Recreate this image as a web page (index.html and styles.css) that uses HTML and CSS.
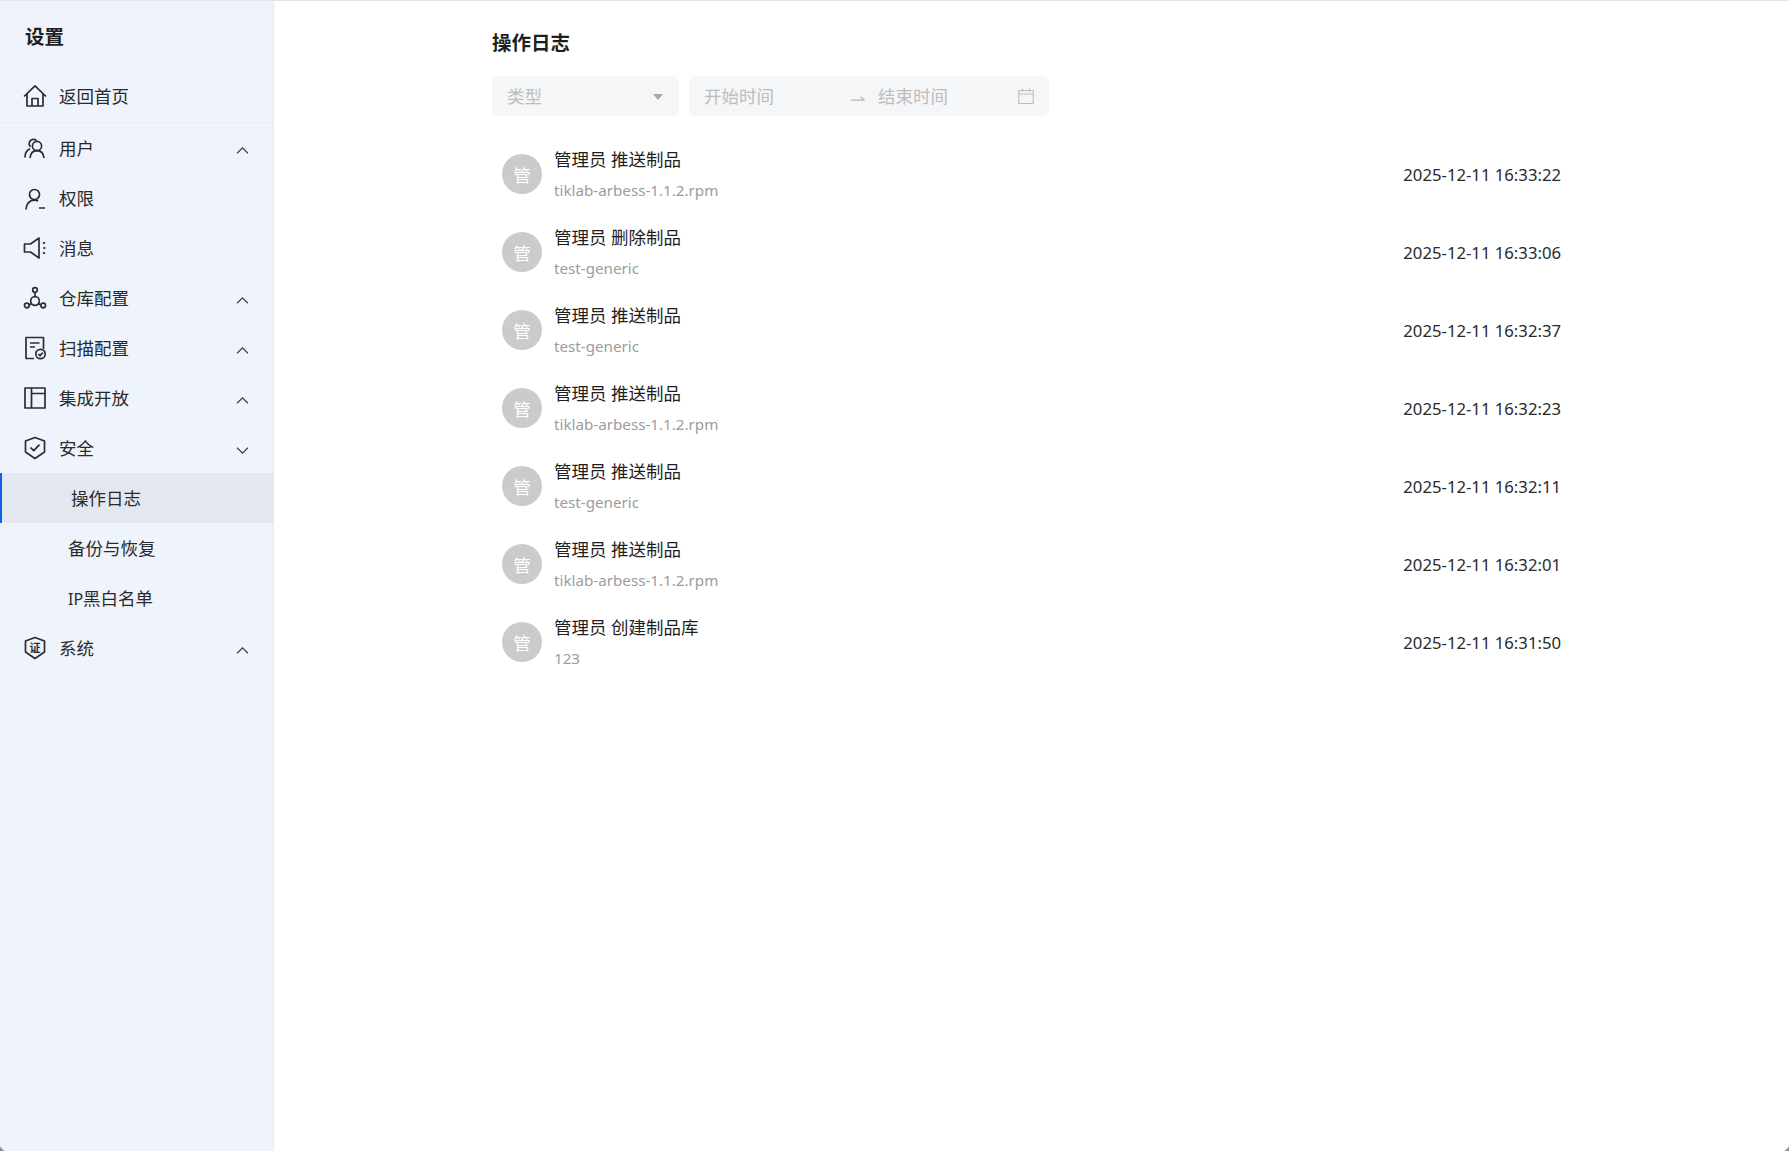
FILE: index.html
```html
<!DOCTYPE html>
<html lang="zh-CN">
<head>
<meta charset="utf-8">
<title>操作日志</title>
<link rel="stylesheet" href="styles.css">
</head>
<body>
<div class="app">
  <aside class="sidebar">
    <div class="side-title">设置</div>
    <nav class="menu">
      <a class="item home">
        <svg class="ico" viewBox="0 0 24 24"><path d="M1 12.500 12 1.800 23 12.500M4 10.200V22h16V10.200M9 22v-7.500h6V22"/></svg>
        <span class="label">返回首页</span>
      </a>
      <a class="item">
        <svg class="ico" viewBox="0 0 24 24"><path d="M7.500 10.800a4.300 4.300 0 1 1 6-6.300M2 21.500c0-4 1.800-7.300 5-8.700"/><circle cx="14" cy="10" r="4.600"/><path d="M7 22c.4-4.700 3-7.400 7-7.400s6.600 2.700 7 7.400"/></svg>
        <span class="label">用户</span>
        <svg class="chev" viewBox="0 0 12 12"><path d="M1 8.500 6 3.500l5 5"/></svg>
      </a>
      <a class="item">
        <svg class="ico" viewBox="0 0 24 24"><circle cx="11.500" cy="8.500" r="5"/><path d="M3 23.500c0-5.300 3.300-9.300 8.500-9.300 1.300 0 2.500.2 3.600.7M16 22h6"/></svg>
        <span class="label">权限</span>
      </a>
      <a class="item">
        <svg class="ico" viewBox="0 0 24 24"><path d="M16 2 7.500 8H1.500v8h6L16 22zM20 7.500l2-1M20 12h2.500M20 16.500l2 1"/></svg>
        <span class="label">消息</span>
      </a>
      <a class="item">
        <svg class="ico" viewBox="0 0 24 24"><circle cx="12" cy="4" r="2.300"/><circle cx="3.800" cy="19.500" r="2.300"/><circle cx="20.200" cy="19.500" r="2.300"/><circle cx="12" cy="15" r="4.300"/><path d="M12 6.300v4.400M6 19.200l2.500-1.700M18 19.200l-2.500-1.700"/></svg>
        <span class="label">仓库配置</span>
        <svg class="chev" viewBox="0 0 12 12"><path d="M1 8.500 6 3.500l5 5"/></svg>
      </a>
      <a class="item">
        <svg class="ico" viewBox="0 0 24 24"><path d="M11 22.500H3V1.500h17.500V13M7 7h9.500M7 11h5"/><circle cx="17.500" cy="18" r="4.700"/><path d="m15.300 18 1.700 1.700 2.800-3"/></svg>
        <span class="label">扫描配置</span>
        <svg class="chev" viewBox="0 0 12 12"><path d="M1 8.500 6 3.500l5 5"/></svg>
      </a>
      <a class="item">
        <svg class="ico" viewBox="0 0 24 24"><path d="M2 2h20v20H2zM8.500 2v20M8.500 7.500H22"/></svg>
        <span class="label">集成开放</span>
        <svg class="chev" viewBox="0 0 12 12"><path d="M1 8.500 6 3.500l5 5"/></svg>
      </a>
      <a class="item">
        <svg class="ico" viewBox="0 0 24 24"><path d="M12 1.500 21.500 5v11L12 22.500 2.500 16V5zM7.500 11.500l3.200 3.200 5.800-6"/></svg>
        <span class="label">安全</span>
        <svg class="chev" viewBox="0 0 12 12"><path d="M1 3.500 6 8.500l5-5"/></svg>
      </a>
      <a class="item sub active"><span class="label">操作日志</span></a>
      <a class="item sub"><span class="label">备份与恢复</span></a>
      <a class="item sub"><span class="label"><span class="latin">IP</span>黑白名单</span></a>
      <a class="item">
        <svg class="ico" viewBox="0 0 24 24"><path d="M12 1.500 21.500 5v11L12 22.500 2.500 16V5z"/><text class="ico-text" x="12" y="16" text-anchor="middle">证</text></svg>
        <span class="label">系统</span>
        <svg class="chev" viewBox="0 0 12 12"><path d="M1 8.500 6 3.500l5 5"/></svg>
      </a>
    </nav>
  </aside>
  <main class="main">
    <div class="content">
      <h1 class="page-title">操作日志</h1>
      <div class="filters">
        <div class="select">
          <span class="ph">类型</span>
          <span class="caret"></span>
        </div>
        <div class="range">
          <span class="ph start">开始时间</span>
          <svg class="arrow" viewBox="0 0 14 5"><path d="M0 4.200h13L9.500 .8"/></svg>
          <span class="ph end">结束时间</span>
          <svg class="cal" viewBox="0 0 16 16"><path d="M.8 2.500h14.400v13H.8zM.8 6h14.400M4.500 .5v3.500M11.500 .5v3.500"/></svg>
        </div>
      </div>
      <ul class="log-list">
        <li class="log"><span class="avatar">管</span><div class="info"><div class="action">管理员 推送制品</div><div class="target">tiklab-arbess-1.1.2.rpm</div></div><time class="time">2025-12-11 16:33:22</time></li>
        <li class="log"><span class="avatar">管</span><div class="info"><div class="action">管理员 删除制品</div><div class="target">test-generic</div></div><time class="time">2025-12-11 16:33:06</time></li>
        <li class="log"><span class="avatar">管</span><div class="info"><div class="action">管理员 推送制品</div><div class="target">test-generic</div></div><time class="time">2025-12-11 16:32:37</time></li>
        <li class="log"><span class="avatar">管</span><div class="info"><div class="action">管理员 推送制品</div><div class="target">tiklab-arbess-1.1.2.rpm</div></div><time class="time">2025-12-11 16:32:23</time></li>
        <li class="log"><span class="avatar">管</span><div class="info"><div class="action">管理员 推送制品</div><div class="target">test-generic</div></div><time class="time">2025-12-11 16:32:11</time></li>
        <li class="log"><span class="avatar">管</span><div class="info"><div class="action">管理员 推送制品</div><div class="target">tiklab-arbess-1.1.2.rpm</div></div><time class="time">2025-12-11 16:32:01</time></li>
        <li class="log"><span class="avatar">管</span><div class="info"><div class="action">管理员 创建制品库</div><div class="target">123</div></div><time class="time">2025-12-11 16:31:50</time></li>
      </ul>
    </div>
  </main>
</div>
<span class="corner corner-left"></span>
<span class="corner corner-right"></span>
</body>
</html>
```
FILE: styles.css
```css
* { box-sizing: border-box; }
html, body { margin: 0; height: 100%; }
body {
  font-family: "Noto Sans", "Noto Sans CJK SC", sans-serif;
  font-size: 17.5px;
  color: #1f1f1f;
  background: #fff;
  overflow: hidden;
}
.app {
  display: flex;
  height: 1151px;
  border-top: 1px solid #e3e5e8;
}
.sidebar {
  width: 274px;
  flex: none;
  background: #eff3fb;
  border-right: 1px solid #e6e9ef;
}
.side-title {
  height: 70px;
  padding: 16px 0 0 25px;
  font-size: 19.500px;
  line-height: 40px;
  font-weight: 700;
}
.menu { display: flex; flex-direction: column; }
.item {
  display: flex;
  align-items: center;
  height: 50px;
  padding: 0 24px 0 23px;
  flex: none;
}
.item.home {
  border-bottom: 1px solid #e8ebf1;
  height: 52px;
  padding-bottom: 1px;
}
.ico {
  width: 24px;
  height: 24px;
  flex: none;
  fill: none;
  stroke: #2a2d33;
  stroke-width: 1.7;
  stroke-linejoin: round;
}
.ico-text {
  font-size: 11px;
  font-weight: 700;
  fill: #2a2d33;
  stroke: none;
}
.label {
  margin-left: 12px;
  line-height: 24px;
  color: #2a2a2a;
}
.latin { font-size: 16px; }
.chev {
  width: 13px;
  height: 13px;
  margin: 4px 0 0 auto;
  fill: none;
  stroke: #3a3d42;
  stroke-width: 1.1;
}
.sub { padding-left: 58px; }
.sub .label { margin-left: 10px; }
.sub.active {
  background: #e2e7f0;
  box-shadow: inset 2px 0 0 #0d63e3;
}
.sub.active .label { margin-left: 13px; }
.main {
  flex: 1;
  min-width: 0;
  display: flex;
  justify-content: center;
}
.content { width: 1079px; }
.page-title {
  margin: 0;
  height: 75px;
  padding-top: 24px;
  font-size: 19.500px;
  line-height: 36px;
  font-weight: 700;
}
.filters {
  display: flex;
  gap: 10px;
  height: 40px;
  margin-bottom: 19px;
}
.select, .range {
  display: flex;
  align-items: center;
  background: #f5f6f8;
  border-radius: 7px;
  padding: 0 15px;
}
.select { width: 187px; justify-content: space-between; }
.range { width: 360px; }
.ph { color: #bdbdbd; line-height: 36px; margin-top: -1px; }
.caret {
  width: 0;
  height: 0;
  margin: 2px 1px 0 0;
  border-left: 5.500px solid transparent;
  border-right: 5.500px solid transparent;
  border-top: 6.500px solid #a9a9a9;
}
.start { width: 147px; }
.arrow {
  width: 14px;
  height: 5px;
  margin: 4px 13px 0 0;
  flex: none;
  fill: none;
  stroke: #b5b5b5;
  stroke-width: 1.2;
}
.end { flex: 1; }
.cal {
  width: 16px;
  height: 16px;
  flex: none;
  fill: none;
  stroke: #bdbdbd;
  stroke-width: 1.1;
}
.log-list { list-style: none; margin: 0; padding: 0; }
.log {
  display: flex;
  align-items: center;
  height: 78px;
  padding: 0 10px;
}
.avatar {
  width: 40px;
  height: 40px;
  flex: none;
  display: flex;
  align-items: center;
  justify-content: center;
  border-radius: 50%;
  background: #cbcbcb;
  color: #fff;
  font-size: 17.500px;
}
.info { margin-left: 12px; flex: 1; min-width: 0; }
.action { line-height: 24px; color: #1f1f1f; }
.target {
  margin-top: 8px;
  font-size: 15.200px;
  line-height: 22px;
  color: #9c9c9c;
}
.time { color: #2a2a2a; font-size: 16.700px; }
.corner {
  position: absolute;
  bottom: 0;
  width: 5px;
  height: 5px;
}
.corner-left {
  left: 0;
  background: linear-gradient(45deg, #8f8f8f 0 30%, transparent 55%);
}
.corner-right {
  right: 0;
  background: linear-gradient(-45deg, #8f8f8f 0 30%, transparent 55%);
}
```
